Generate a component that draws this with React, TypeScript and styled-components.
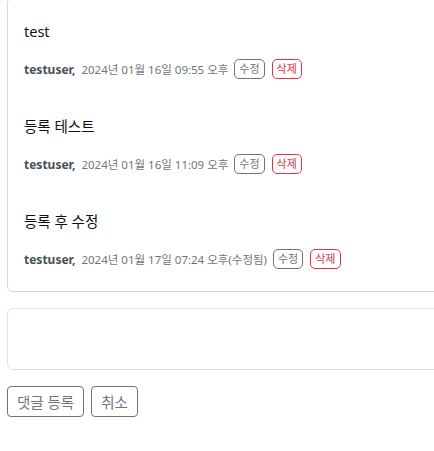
import React from 'react'
import styled, { createGlobalStyle } from 'styled-components'

interface Comment {
  id: number
  content: string
  author: string
  date: string
  edited?: boolean
}

interface SmallButtonProps {
  readonly $variant: 'secondary' | 'danger'
}

const COMMENTS: Comment[] = [
  { id: 1, content: 'test', author: 'testuser', date: '2024년 01월 16일 09:55 오후' },
  { id: 2, content: '등록 테스트', author: 'testuser', date: '2024년 01월 16일 11:09 오후' },
  { id: 3, content: '등록 후 수정', author: 'testuser', date: '2024년 01월 17일 07:24 오후', edited: true },
]

const GlobalStyle = createGlobalStyle`
  html, body {
    margin: 0;
    padding: 0;
    background: #fff;
    overflow: hidden;
  }
  body {
    font-family: 'Noto Sans', 'Noto Sans CJK KR', sans-serif;
    color: #212529;
  }
`

const App: React.FC = () => {
  return (
    <>
      <GlobalStyle />
      <StyledPage>
        <StyledCommentCard>
          {COMMENTS.map((comment) => (
            <StyledComment key={comment.id}>
              <StyledContent>{comment.content}</StyledContent>
              <StyledMeta>
                <StyledAuthor>{comment.author},</StyledAuthor>
                <StyledDate>
                  {comment.date}
                  {comment.edited && '(수정됨)'}
                </StyledDate>
                <StyledSmallButton $variant='secondary'>수정</StyledSmallButton>
                <StyledSmallButton $variant='danger'>삭제</StyledSmallButton>
              </StyledMeta>
            </StyledComment>
          ))}
        </StyledCommentCard>
        <StyledTextarea />
        <StyledActions>
          <StyledButton>댓글 등록</StyledButton>
          <StyledButton>취소</StyledButton>
        </StyledActions>
      </StyledPage>
    </>
  )
}

const StyledPage = styled.div`
  width: 640px;
  padding-left: 7px;
`

const StyledCommentCard = styled.div`
  margin-top: -3px;
  padding: 4px 0 4px;
  border: 1px solid #d9d9d9;
  border-radius: 6px;
`

const StyledComment = styled.div`
  padding: 18px 16px;
`

const StyledContent = styled.div`
  font-size: 14.5px;
  line-height: 22px;
  color: #111;
`

const StyledMeta = styled.div`
  display: flex;
  align-items: center;
  margin-top: 17px;
  height: 20px;
`

const StyledAuthor = styled.span`
  font-size: 12px;
  font-weight: 700;
  color: #495057;
  margin-right: 6px;
`

const StyledDate = styled.span`
  font-size: 11.5px;
  color: #6c757d;
  margin-right: 6px;
`

const StyledSmallButton = styled.button<SmallButtonProps>`
  height: 20px;
  padding: 0 4px;
  margin-right: 7px;
  font-family: inherit;
  font-size: 11px;
  line-height: 18px;
  background: #fff;
  border-radius: 5px;
  border: 1px solid
    ${(props) => (props.$variant === 'danger' ? '#dc3545' : '#6c757d')};
  color: ${(props) => (props.$variant === 'danger' ? '#dc3545' : '#6c757d')};
`

const StyledTextarea = styled.textarea`
  display: block;
  box-sizing: border-box;
  width: 100%;
  height: 62px;
  margin-top: 16px;
  border: 1px solid #dee2e6;
  border-radius: 6px;
  resize: none;
`

const StyledActions = styled.div`
  display: flex;
  gap: 7px;
  margin-top: 16px;
`

const StyledButton = styled.button`
  height: 31px;
  padding: 0 9px;
  font-family: inherit;
  font-size: 14.5px;
  color: #6c757d;
  background: #fff;
  border: 1px solid #6c757d;
  border-radius: 4px;
`

export default App
